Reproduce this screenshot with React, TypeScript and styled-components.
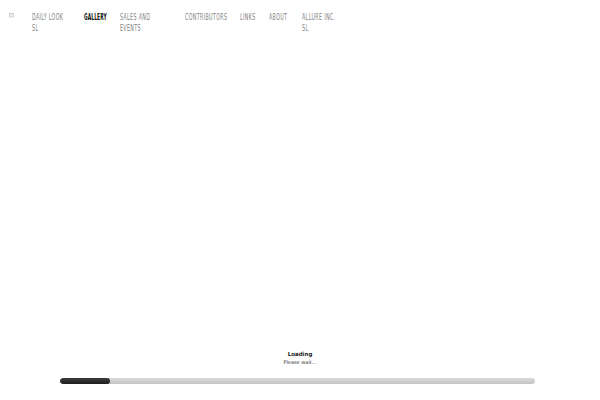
import styled, { createGlobalStyle } from "styled-components"

const GlobalStyle = createGlobalStyle`
  html, body {
    margin: 0;
    padding: 0;
    background: #fff;
  }
  body {
    font-family: "DejaVu Sans Condensed", "Liberation Sans", sans-serif;
  }
`

const SQUEEZE = 0.62

const Page = styled.div`
  width: 600px;
  height: 400px;
  display: flex;
  flex-direction: column;
  overflow: hidden;
`

const Header = styled.header`
  display: flex;
  align-items: flex-start;
  padding: 12px 0 0 9px;
`

const Logo = styled.div`
  width: 23px;
  padding-top: 1px;
  display: flex;
`

const Nav = styled.nav`
  display: flex;
  align-items: flex-start;
`

type NavItemProps = {
  $w: number
  $gap: number
}

const NavItem = styled.a<NavItemProps>`
  display: block;
  width: ${({ $w }) => $w}px;
  margin-right: ${({ $gap }) => $gap}px;
  text-decoration: none;
`

const Label = styled.span<{ $w: number; $active?: boolean }>`
  display: block;
  width: ${({ $w }) => $w / SQUEEZE}px;
  font-size: ${({ $active }) => ($active ? 8 : 8.5)}px;
  line-height: 11px;
  letter-spacing: ${({ $active }) => ($active ? 0.1 : 0.6)}px;
  text-transform: uppercase;
  color: ${({ $active }) => ($active ? '#111' : '#7d7d7d')};
  font-weight: ${({ $active }) => ($active ? 700 : 400)};
  transform: scaleX(${SQUEEZE});
  transform-origin: left top;
`

const Spacer = styled.div`
  flex: 1;
`

const Loader = styled.div`
  display: flex;
  flex-direction: column;
  align-items: center;
  padding-bottom: 16px;
`

const LoadTitle = styled.div`
  font-family: "DejaVu Sans", "Liberation Sans", sans-serif;
  font-size: 5.5px;
  font-weight: 700;
  color: #222;
  line-height: 8px;
`

const LoadSub = styled.div`
  font-family: "DejaVu Sans", "Liberation Sans", sans-serif;
  font-size: 5px;
  color: #333;
  line-height: 8px;
  margin-bottom: 12px;
`

const Track = styled.div`
  width: 475px;
  height: 6px;
  margin-right: 5px;
  border-radius: 3px;
  background: linear-gradient(#d8d8d8, #c4c4c4);
  overflow: hidden;
`

const Fill = styled.div`
  height: 100%;
  border-radius: 3px;
  background: linear-gradient(#3c3c3c, #1e1e1e);
`

const links = [
  { label: 'Daily look SL', w: 36, gap: 16 },
  { label: 'Gallery', w: 26, gap: 10, active: true },
  { label: 'Sales and events', w: 40, gap: 25 },
  { label: 'Contributors', w: 45, gap: 10 },
  { label: 'Links', w: 20, gap: 9 },
  { label: 'About', w: 24, gap: 9 },
  { label: 'Allure Inc. SL', w: 34, gap: 0 },
]

export default function App() {
  const progress = 10.5

  return (
    <Page>
      <GlobalStyle />
      <Header>
        <Logo>
          <svg width="5" height="5" viewBox="0 0 5 5">
            <rect x="0.5" y="0.5" width="4" height="3.5" fill="#eee" stroke="#bbb" strokeWidth="0.6" />
          </svg>
        </Logo>
        <Nav>
          {links.map((l) => (
            <NavItem key={l.label} href="#" $w={l.w} $gap={l.gap}>
              <Label $w={l.w} $active={l.active}>{l.label}</Label>
            </NavItem>
          ))}
        </Nav>
      </Header>
      <Spacer />
      <Loader>
        <LoadTitle>Loading</LoadTitle>
        <LoadSub>Please wait...</LoadSub>
        <Track>
          <Fill style={{ width: `${progress}%` }} />
        </Track>
      </Loader>
    </Page>
  )
}
